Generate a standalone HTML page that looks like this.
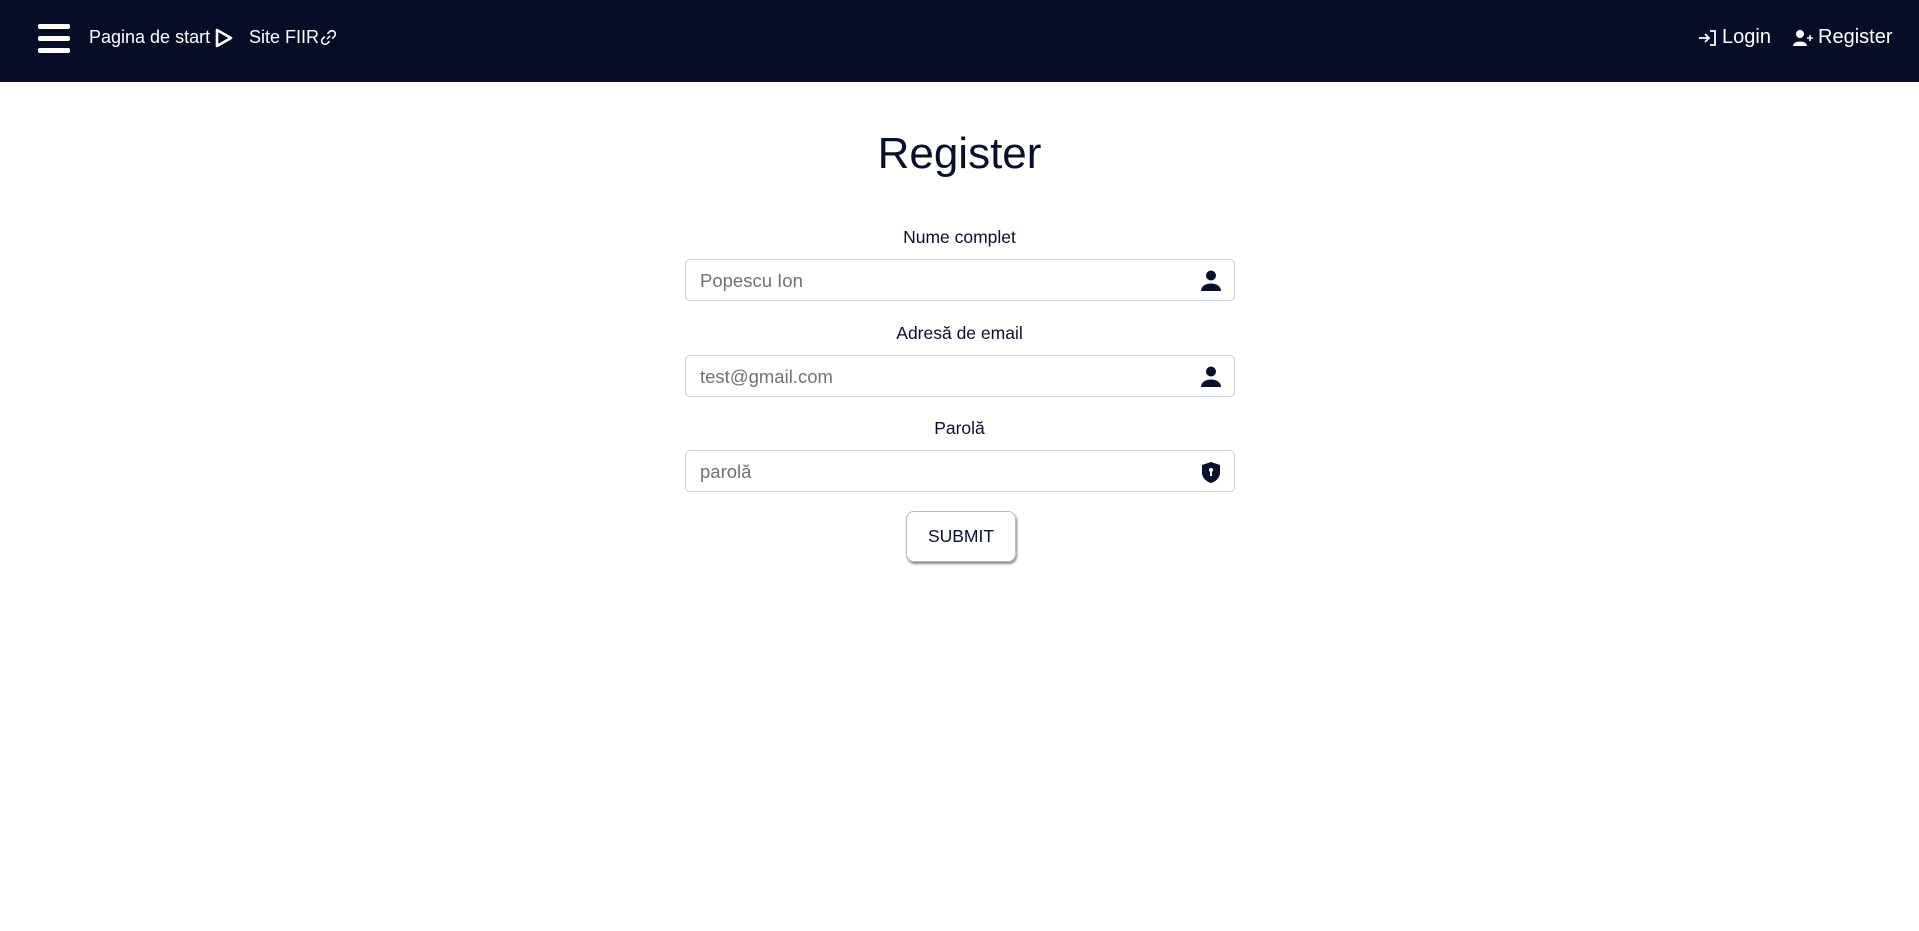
<!DOCTYPE html>
<html><head><meta charset="utf-8"><style>
*{box-sizing:border-box;margin:0;padding:0}
body{width:1919px;height:931px;background:#fff;font-family:"Liberation Sans",sans-serif;overflow:hidden;position:relative}
.nav{position:absolute;left:0;top:0;width:1919px;height:82px;background:#070c27;color:#fff}
.nav .t{position:absolute;top:25px;font-size:18px;line-height:24px;white-space:nowrap}
.nav .r{font-size:20px}
h1{position:absolute;left:0;width:1919px;top:128px;text-align:center;font-weight:400;font-size:44px;line-height:52px;color:#0a0f2c}
.lab{position:absolute;left:0;width:1919px;text-align:center;font-size:17.5px;color:#0a0f2c;line-height:22px}
.in{position:absolute;left:685px;width:550px;height:42px;border:1px solid #cfd3d9;border-radius:5px;font-size:18.5px;color:#6c727c;padding:10px 14px;line-height:22px}
.in svg{position:absolute;right:12px;top:10px}
.btn{position:absolute;left:906px;top:511px;width:110px;height:51px;border:1px solid #bbb;border-radius:8px;box-shadow:1px 2px 2px #888;text-align:center;line-height:49px;font-size:17.5px;color:#0a0f2c}
</style></head><body>
<div class="nav">
<svg style="position:absolute;left:38px;top:24px" width="32" height="29"><rect x="0" y="0" width="32" height="5" rx="2" fill="#fff"/><rect x="0" y="12" width="32" height="5" rx="2" fill="#fff"/><rect x="0" y="24" width="32" height="5" rx="2" fill="#fff"/></svg>
<div class="t" style="left:89px">Pagina de start</div>
<svg style="position:absolute;left:215px;top:28px" width="18" height="20"><path d="M2 2 L16 10 L2 18 Z" fill="none" stroke="#fff" stroke-width="2.6" stroke-linejoin="round"/></svg>
<div class="t" style="left:249px">Site FIIR</div>
<svg style="position:absolute;left:320px;top:29px" width="17" height="17" viewBox="0 0 16 16" fill="none" stroke="#fff" stroke-width="1.5"><path d="M6.5 9.5 L9.5 6.5"/><path d="M7 4.5 L9 2.5 a2.5 2.5 0 0 1 4.5 4.5 L11.5 9"/><path d="M9 11.5 L7 13.5 a2.5 2.5 0 0 1 -4.5 -4.5 L4.5 7"/></svg>
<svg style="position:absolute;left:1698px;top:29px" width="19" height="18" viewBox="0 0 19 18" fill="none" stroke="#fff" stroke-width="1.8"><path d="M1 9 H11 M7 5 L11 9 L7 13"/><path d="M12 2 H17 V16 H12"/></svg>
<div class="t r" style="left:1722px;top:25px">Login</div>
<svg style="position:absolute;left:1793px;top:29px" width="22" height="18" viewBox="0 0 22 18" fill="#fff"><circle cx="7" cy="5" r="4"/><path d="M0 17 C0 11 14 11 14 17 Z"/><path d="M17 6 V12 M14 9 H20" stroke="#fff" stroke-width="1.6"/></svg>
<div class="t r" style="left:1818px;top:25px">Register</div>
</div>
<h1>Register</h1>
<div class="lab" style="top:226px">Nume complet</div>
<div class="in" style="top:259px">Popescu Ion<svg width="22" height="21" viewBox="0 0 22 21" fill="#0a0f2c"><circle cx="11" cy="5.5" r="5"/><path d="M1 21 C1 11 21 11 21 21 Z"/></svg></div>
<div class="lab" style="top:322px">Adresă de email</div>
<div class="in" style="top:355px">test@gmail.com<svg width="22" height="21" viewBox="0 0 22 21" fill="#0a0f2c"><circle cx="11" cy="5.5" r="5"/><path d="M1 21 C1 11 21 11 21 21 Z"/></svg></div>
<div class="lab" style="top:417px">Parolă</div>
<div class="in" style="top:450px">parolă<svg width="22" height="23" viewBox="0 0 22 23"><path d="M11 1 L20 4 V12 C20 17 15 21 11 22 C7 21 2 17 2 12 V4 Z" fill="#0a0f2c"/><circle cx="11" cy="9" r="2" fill="#fff"/><rect x="10" y="9" width="2" height="6" fill="#fff"/></svg></div>
<div class="btn">SUBMIT</div>
</body></html>
